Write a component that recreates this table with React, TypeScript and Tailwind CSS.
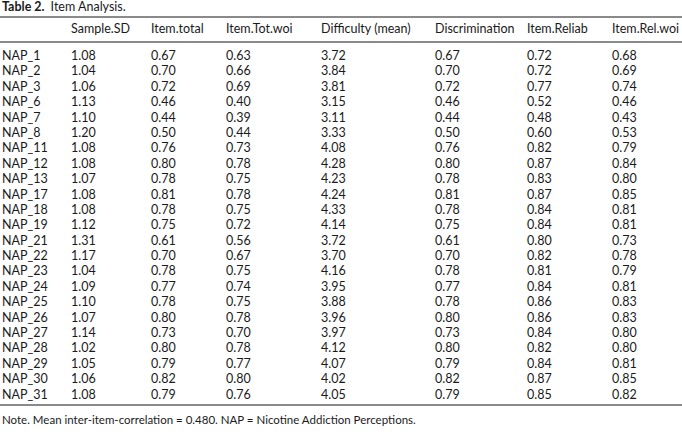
const rows: string[][] = [
  ["NAP_1", "1.08", "0.67", "0.63", "3.72", "0.67", "0.72", "0.68"],
  ["NAP_2", "1.04", "0.70", "0.66", "3.84", "0.70", "0.72", "0.69"],
  ["NAP_3", "1.06", "0.72", "0.69", "3.81", "0.72", "0.77", "0.74"],
  ["NAP_6", "1.13", "0.46", "0.40", "3.15", "0.46", "0.52", "0.46"],
  ["NAP_7", "1.10", "0.44", "0.39", "3.11", "0.44", "0.48", "0.43"],
  ["NAP_8", "1.20", "0.50", "0.44", "3.33", "0.50", "0.60", "0.53"],
  ["NAP_11", "1.08", "0.76", "0.73", "4.08", "0.76", "0.82", "0.79"],
  ["NAP_12", "1.08", "0.80", "0.78", "4.28", "0.80", "0.87", "0.84"],
  ["NAP_13", "1.07", "0.78", "0.75", "4.23", "0.78", "0.83", "0.80"],
  ["NAP_17", "1.08", "0.81", "0.78", "4.24", "0.81", "0.87", "0.85"],
  ["NAP_18", "1.08", "0.78", "0.75", "4.33", "0.78", "0.84", "0.81"],
  ["NAP_19", "1.12", "0.75", "0.72", "4.14", "0.75", "0.84", "0.81"],
  ["NAP_21", "1.31", "0.61", "0.56", "3.72", "0.61", "0.80", "0.73"],
  ["NAP_22", "1.17", "0.70", "0.67", "3.70", "0.70", "0.82", "0.78"],
  ["NAP_23", "1.04", "0.78", "0.75", "4.16", "0.78", "0.81", "0.79"],
  ["NAP_24", "1.09", "0.77", "0.74", "3.95", "0.77", "0.84", "0.81"],
  ["NAP_25", "1.10", "0.78", "0.75", "3.88", "0.78", "0.86", "0.83"],
  ["NAP_26", "1.07", "0.80", "0.78", "3.96", "0.80", "0.86", "0.83"],
  ["NAP_27", "1.14", "0.73", "0.70", "3.97", "0.73", "0.84", "0.80"],
  ["NAP_28", "1.02", "0.80", "0.78", "4.12", "0.80", "0.82", "0.80"],
  ["NAP_29", "1.05", "0.79", "0.77", "4.07", "0.79", "0.84", "0.81"],
  ["NAP_30", "1.06", "0.82", "0.80", "4.02", "0.82", "0.87", "0.85"],
  ["NAP_31", "1.08", "0.79", "0.76", "4.05", "0.79", "0.85", "0.82"],
];

const headers = [
  "",
  "Sample.SD",
  "Item.total",
  "Item.Tot.woi",
  "Difficulty (mean)",
  "Discrimination",
  "Item.Reliab",
  "Item.Rel.woi",
];

// column widths measured off the picture
const cols =
  "grid grid-cols-[69px_80px_75px_95px_114px_92px_85px_1fr] pl-[2px] whitespace-nowrap";

export default function App() {
  return (
    <div className="w-[682px] h-[438px] overflow-hidden bg-white text-[#1a1a1a] font-['Lato','Liberation_Sans',sans-serif] text-[12.5px]">
      <div className="h-[16px] pl-[2px] leading-[14px]">
        <span className="font-bold">Table 2.</span>
        <span className="ml-[6px]">Item Analysis.</span>
      </div>

      <div className="h-[2px] bg-[#8a8a8a]" />
      <div className={`${cols} h-[23px] items-center`}>
        {headers.map((h, i) => (
          <div key={i}>{h}</div>
        ))}
      </div>
      <div className="h-[2px] bg-[#8a8a8a]" />

      <div className="pt-[4px] pb-[3px]">
        {rows.map((r) => (
          <div key={r[0]} className={`${cols} h-[15.4px] items-center`}>
            {r.map((c, i) => (
              <div key={i}>{c}</div>
            ))}
          </div>
        ))}
      </div>
      <div className="h-[2px] bg-[#8a8a8a]" />

      <div className="pl-[2px] pt-[7px] text-[11.5px] leading-[14px]">
        Note. Mean inter-item-correlation = 0.480. NAP = Nicotine Addiction
        Perceptions.
      </div>
    </div>
  );
}
